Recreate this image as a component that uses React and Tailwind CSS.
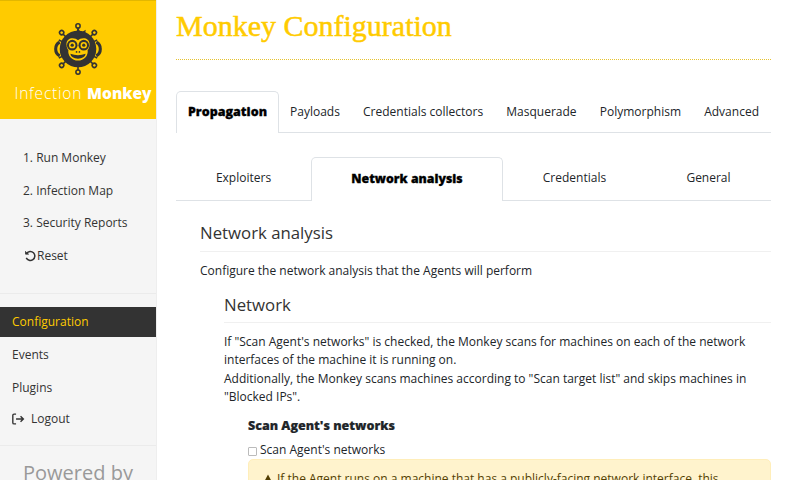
const mainTabs = ["Payloads", "Credentials collectors", "Masquerade", "Polymorphism", "Advanced"];

const MonkeyLogo = () => {
  const spokes = [0, 45, 135, 180, 225, 315];
  const side = [65, 115, 245, 295];
  return (
    <svg width="50" height="52" viewBox="0 0 50 54" className="block">
      <g stroke="#333" strokeWidth="1.6" fill="none">
        {spokes.map((a) => (
          <g key={a} transform={`rotate(${a} 25 27)`}>
            <line x1="25" y1="9" x2="25" y2="4" />
            <circle cx="25" cy="3" r="2.200" fill="#ffcb00" />
          </g>
        ))}
        {side.map((a) => (
          <g key={a} transform={`rotate(${a} 25 27)`}>
            <line x1="25" y1="9" x2="25" y2="5" />
          </g>
        ))}
        <path d="M6 20a6.500 7.500 0 0 0 0 14" strokeWidth="3.200" />
        <path d="M44 20a6.500 7.500 0 0 1 0 14" strokeWidth="3.200" />
      </g>
      <circle cx="25" cy="27" r="19" fill="#333" />
      <path d="M25 5l3 5 5-3-1 7H21z" fill="#333" />
      <path d="M25 18c3-3.500 12-3.500 12 4 0 3-1 5-2 6 1 6-4 11-10 11s-11-5-10-11c-1-1-2-3-2-6 0-7.500 9-7.500 12-4z" fill="#ffcb00" />
      <circle cx="19" cy="23" r="5.500" fill="#333" />
      <circle cx="31" cy="23" r="5.500" fill="#333" />
      <circle cx="19" cy="23" r="3.300" fill="#ffcb00" />
      <circle cx="31" cy="23" r="3.300" fill="#ffcb00" />
      <circle cx="19" cy="23" r="1.700" fill="#333" />
      <circle cx="31" cy="23" r="1.700" fill="#333" />
      <circle cx="23.500" cy="30" r="0.900" fill="#333" />
      <circle cx="26.500" cy="30" r="0.900" fill="#333" />
      <path d="M17 32q8 3 16 0q-1 5-8 5t-8-5z" fill="#333" />
    </svg>
  );
};

const ResetIcon = () => (
  <svg width="12" height="12" viewBox="0 0 16 16" fill="none" stroke="#333" strokeWidth="2" className="mr-px">
    <path d="M3.500 4.500A6 6 0 1 1 3 10.500" />
    <path d="M2 1.500v4h4.500" fill="#333" strokeWidth="1" />
  </svg>
);

const LogoutIcon = () => (
  <svg width="13" height="12" viewBox="0 0 16 14" fill="none" stroke="#333" strokeWidth="1.700">
    <path d="M5 1H2.500Q1 1 1 2.500v9Q1 13 2.500 13H5" />
    <path d="M5 7h9M10.500 3.500 14 7l-3.500 3.500" />
  </svg>
);

const SideLink = ({ children, className = "" }) => (
  <div className={`flex items-center shrink-0 h-[32.500px] text-[12px] text-[#333] ${className}`}>{children}</div>
);

export default function App() {
  return (
    <div className="flex h-[480px] w-[800px] overflow-hidden bg-white font-['Open_Sans',sans-serif] text-[#212529]">
      <aside className="w-[157px] shrink-0 bg-[#f5f5f5] border-r border-[#eeeeee] flex flex-col overflow-hidden">
        <div className="h-[119px] shrink-0 bg-[#ffcb00] border-t border-[#e3b700] flex flex-col items-center">
          <div className="mt-[22px]">
            <MonkeyLogo />
          </div>
          <div className="mt-[8px] ml-[10px] text-[15.500px] leading-[20px] tracking-[0.8px] text-white whitespace-nowrap font-light">
            Infection <span className="font-extrabold tracking-normal">Monkey</span>
          </div>
        </div>
        <div className="pt-[23px] pl-[23px] shrink-0">
          <SideLink>1. Run Monkey</SideLink>
          <SideLink>2. Infection Map</SideLink>
          <SideLink>3. Security Reports</SideLink>
          <SideLink className="pl-px">
            <ResetIcon />
            Reset
          </SideLink>
        </div>
        <div className="mt-[21px] shrink-0 border-t border-[#ebebeb]" />
        <div className="mt-[13px] h-[30px] shrink-0 bg-[#333333] flex items-center pl-3 text-[12px] text-[#ffcb00]">
          Configuration
        </div>
        <div className="pl-3 mt-[2px] shrink-0">
          <SideLink>Events</SideLink>
          <SideLink>Plugins</SideLink>
          <SideLink className="gap-[6px] -mt-[1px]">
            <LogoutIcon />
            Logout
          </SideLink>
        </div>
        <div className="mt-[9px] shrink-0 border-t border-[#ebebeb]" />
        <div className="mt-[15px] shrink-0 text-center text-[20px] leading-[24px] text-[#999999] whitespace-nowrap">Powered by</div>
      </aside>

      <main className="w-[595px] ml-[19px] shrink-0">
        <h1 className="h-[60px] pt-[7px] border-b border-dotted border-[#e6c22e] text-[30px] leading-[38px] text-[#ffcb00] font-['Liberation_Serif',serif] font-normal [-webkit-text-stroke:0.5px_#ffcb00]">
          Monkey Configuration
        </h1>
        <nav className="mt-[31px] flex h-[42px] border-b border-[#dee2e6] text-[12px]">
          <div className="w-[103px] h-[42px] flex items-center justify-center bg-white border border-b-0 border-[#dee2e6] rounded-t-[5px] text-[12.500px] font-black text-black [-webkit-text-stroke:0.3px_#000]">
            Propagation
          </div>
          <div className="flex flex-1 justify-between items-center pl-[11px] pr-[12px] pt-px text-[#212529]">
            {mainTabs.map((tab) => (
              <span key={tab}>{tab}</span>
            ))}
          </div>
        </nav>
        <nav className="mt-[24px] flex h-[44px] border-b border-[#dee2e6] text-[12px]">
          <div className="w-[135px] flex items-center justify-center pb-px">Exploiters</div>
          <div className="w-[192px] h-[44px] flex items-center justify-center pb-px bg-white border border-b-0 border-[#dee2e6] rounded-t-[5px] text-[12.300px] font-black text-black [-webkit-text-stroke:0.3px_#000]">
            Network analysis
          </div>
          <div className="w-[143px] flex items-center justify-center pb-px">Credentials</div>
          <div className="flex-1 flex items-center justify-center pb-px">General</div>
        </nav>

        <section className="pl-[24px]">
          <h2 className="mt-[20px] pb-[6px] text-[16.800px] leading-[24px] text-[#333] border-b border-[#f0f0f0]">Network analysis</h2>
          <p className="mt-[10px] text-[12px] leading-[18px]">Configure the network analysis that the Agents will perform</p>
          <div className="pl-[24px]">
            <h3 className="mt-[13px] pb-[5px] text-[16.800px] leading-[24px] text-[#333] border-b border-[#f0f0f0]">Network</h3>
            <p className="mt-[10px] text-[12px] leading-[18.300px]">
              If "Scan Agent's networks" is checked, the Monkey scans for machines on each of the network interfaces of the machine it is running on.
              <br />
              Additionally, the Monkey scans machines according to "Scan target list" and skips machines in "Blocked IPs".
            </p>
            <div className="pl-[24px]">
              <div className="mt-[10px] text-[12.500px] leading-[20px] font-black text-[#212529] [-webkit-text-stroke:0.2px_#212529]">Scan Agent's networks</div>
              <label className="mt-[5px] flex items-center text-[12px] leading-[18px]">
                <span className="w-[9px] h-[9px] mt-[3px] mr-[3px] border border-[#bbbbbb] rounded-[1px] bg-white" />
                Scan Agent's networks
              </label>
              <div className="h-[40px] bg-[#fff3cd] border border-[#ffeeba] rounded-[5px] pt-[10px] pl-[14px] pr-[16px] text-[12px] leading-[18px] whitespace-nowrap overflow-hidden text-[#533f03] flex items-start gap-[4px]">
                <svg width="10" height="10" viewBox="0 0 10 10" className="mt-[4px] shrink-0">
                  <path d="M5 .5 9.800 9.500H.2z" fill="#533f03" />
                </svg>
                <span>If the Agent runs on a machine that has a publicly-facing network interface, this</span>
              </div>
            </div>
          </div>
        </section>
      </main>
    </div>
  );
}
